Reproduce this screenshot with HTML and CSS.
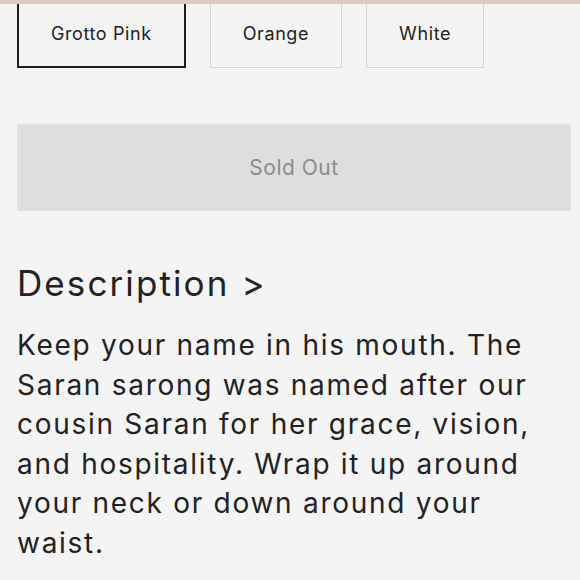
FILE: index.html
```html
<!DOCTYPE html>
<html lang="en">
<head>
<meta charset="utf-8">
<link rel="stylesheet" href="styles.css">
</head>
<body>
<div class="topbar"></div>
<main class="page">
  <div class="variants">
    <button class="variant selected">Grotto Pink</button>
    <button class="variant">Orange</button>
    <button class="variant">White</button>
  </div>
  <button class="soldout" disabled>Sold Out</button>
  <h2 class="desc-title">Description &gt;</h2>
  <p class="desc-text">Keep your name in his mouth. The<br>Saran sarong was named after our<br>cousin Saran for her grace, vision,<br>and hospitality. Wrap it up around<br>your neck or down around your<br>waist.</p>
</main>
</body>
</html>
```
FILE: styles.css
```css
html, body {
  margin: 0;
  padding: 0;
  background: #f4f4f4;
}
body {
  font-family: Inter, "Noto Sans", sans-serif;
  color: #222;
  width: 580px;
  height: 580px;
  overflow: hidden;
  position: relative;
}
.topbar {
  position: absolute;
  top: 0;
  left: 0;
  right: 0;
  height: 4px;
  background: #dccbc0;
  z-index: 2;
}
.page {
  padding: 0 9px 0 17px;
}
.variants {
  display: flex;
  gap: 24px;
  margin-top: -1px;
}
.variant {
  font-family: inherit;
  font-size: 18px;
  letter-spacing: 0.6px;
  color: #222;
  background: transparent;
  height: 69px;
  padding: 0 32px;
  border: 1.5px solid #dccfc7;
  box-sizing: border-box;
}
.variant.selected {
  border: 2px solid #1e1e1e;
}
.soldout {
  display: block;
  width: 554px;
  height: 87px;
  margin-top: 56px;
  background: #dedede;
  border: 1px solid #e4e4e4;
  font-family: inherit;
  font-size: 21px;
  letter-spacing: 0.5px;
  color: #8c8c8c;
  box-sizing: border-box;
}
.desc-title {
  margin: 51px 0 0;
  font-size: 35px;
  line-height: 42px;
  letter-spacing: 2.1px;
  font-weight: 400;
  color: #222;
}
.desc-text {
  margin: 22px 0 0;
  font-size: 28px;
  line-height: 39.5px;
  letter-spacing: 1.72px;
  white-space: nowrap;
  color: #222;
}
```
